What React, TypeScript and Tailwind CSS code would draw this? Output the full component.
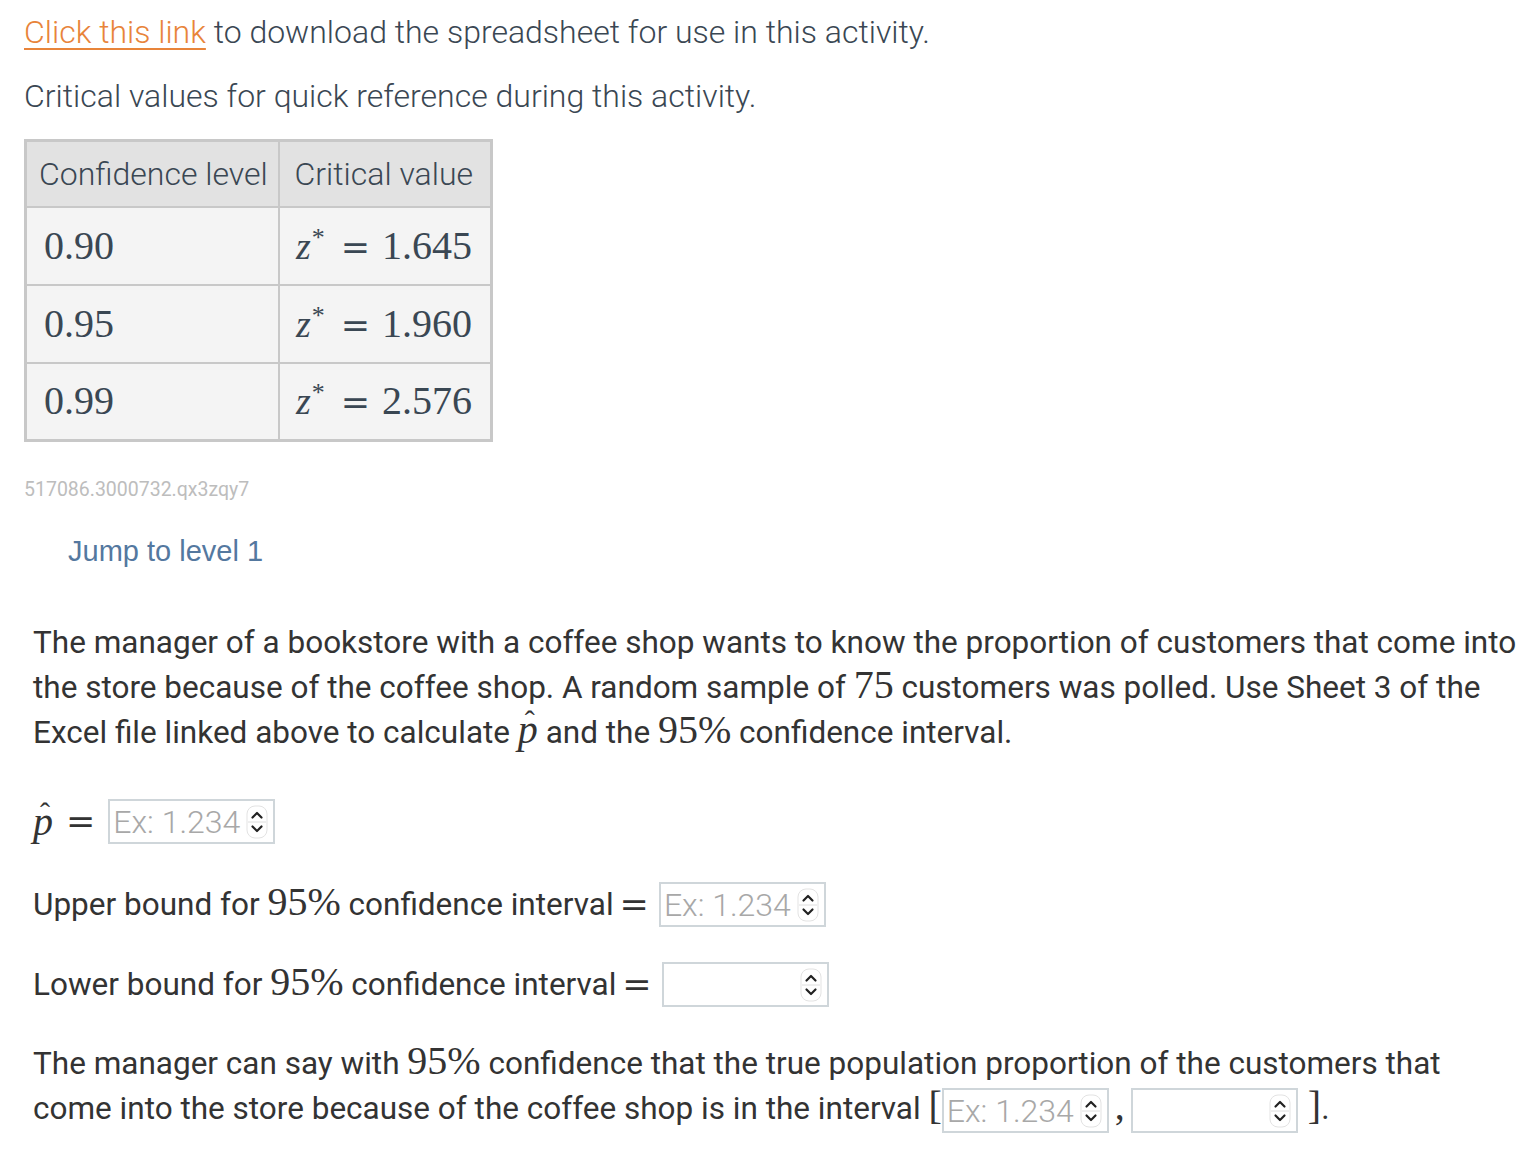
import React from "react";

const SANS = { fontFamily: "Roboto, 'Liberation Sans', sans-serif" };
const SERIF = { fontFamily: "'Liberation Serif', 'DejaVu Serif', serif" };
const EQ = { fontFamily: "'DejaVu Serif', 'Liberation Serif', serif" };

const Spinner = () => (
  <svg width="22" height="34" viewBox="0 0 22 34" className="shrink-0">
    <rect x="1" y="1" width="20" height="32" rx="8" fill="#ffffff" stroke="#e3e3e3" />
    <line x1="2" y1="17" x2="20" y2="17" stroke="#dedede" />
    <path d="M6.5 12.5 L11 8 L15.5 12.5" stroke="#222" strokeWidth="2.2" fill="none" strokeLinecap="round" strokeLinejoin="round" />
    <path d="M6.5 21.5 L11 26 L15.5 21.5" stroke="#222" strokeWidth="2.2" fill="none" strokeLinecap="round" strokeLinejoin="round" />
  </svg>
);

const NumInput = ({ placeholder }: { placeholder?: string }) => (
  <span className="inline-flex h-[45px] w-[167px] items-center justify-between border-2 border-[#cfd6da] bg-white pl-[3px] pr-[5px] align-middle leading-none">
    <span className="text-[32px] font-light text-[#a8a8a8]" style={SANS}>
      {placeholder ?? ""}
    </span>
    <Spinner />
  </span>
);

const Num = ({ children }: { children: React.ReactNode }) => (
  <span className="text-[40px] leading-none" style={SERIF}>
    {children}
  </span>
);

const PHat = () => (
  <span className="relative inline-block text-[40px] italic leading-none" style={SERIF}>
    <span className="absolute left-[7px] top-[-4px] not-italic text-[30px]">ˆ</span>
    p
  </span>
);

const Eq = ({ cls = "mx-[13px]" }: { cls?: string }) => (
  <span className={`${cls} text-[35px] leading-none`} style={EQ}>
    =
  </span>
);

const rows = [
  { level: "0.90", value: "1.645" },
  { level: "0.95", value: "1.960" },
  { level: "0.99", value: "2.576" },
];

export default function App() {
  return (
    <div className="min-h-[1170px] w-[1527px] bg-white pl-[24px] pt-[10px] text-[#3a4753]" style={SANS}>
      <p className="text-[32px] font-light leading-[44px]">
        <a className="text-[#e8843a] underline decoration-2 underline-offset-[5px]">Click this link</a> to download
        the spreadsheet for use in this activity.
      </p>
      <p className="mt-[20px] text-[32px] font-light leading-[44px]">
        Critical values for quick reference during this activity.
      </p>

      <table className="mt-[21px] border-collapse border-[3px] border-[#c8c8c8]">
        <thead>
          <tr className="h-[66px] bg-[#e2e2e2]">
            <th className="w-[253px] border-2 border-[#c8c8c8] pl-[12px] text-left text-[32px] font-light">
              Confidence level
            </th>
            <th className="w-[213px] border-2 border-[#c8c8c8] pl-[15px] text-left text-[32px] font-light">
              Critical value
            </th>
          </tr>
        </thead>
        <tbody>
          {rows.map((r) => (
            <tr key={r.level} className="h-[78px] bg-[#f4f4f4]">
              <td className="border-2 border-[#c8c8c8] pl-[17px]">
                <Num>{r.level}</Num>
              </td>
              <td className="border-2 border-[#c8c8c8] pr-[18px] text-right">
                <span className="text-[38px] leading-none" style={SERIF}>
                  <i>z</i>
                  <sup className="ml-[1px] text-[26px]">*</sup>
                </span>
                <Eq cls="ml-[16px] mr-[12px]" />
                <Num>{r.value}</Num>
              </td>
            </tr>
          ))}
        </tbody>
      </table>

      <div className="mt-[34px] text-[19.5px] leading-[28px] text-[#bdbdbd]">517086.3000732.qx3zqy7</div>

      <div
        className="ml-[44px] mt-[25px] text-[29px] leading-[44px] text-[#54789f]"
        style={{ fontFamily: "'Liberation Sans', Arial, sans-serif" }}
      >
        Jump to level 1
      </div>

      <div className="pl-[9px] text-[#333333]">
        <p className="mt-[48px] w-[1494px] text-[31.5px] leading-[44px]">
          The manager of a bookstore with a coffee shop wants to know the proportion of customers that come into the
          store because of the coffee shop. A random sample of <Num>75</Num> customers was polled. Use Sheet 3 of the
          Excel file linked above to calculate <PHat /> and the <Num>95%</Num> confidence interval.
        </p>

        <div className="mt-[44px] flex h-[45px] items-center">
          <PHat />
          <Eq />
          <NumInput placeholder="Ex: 1.234" />
        </div>

        <div className="mt-[38px] flex h-[45px] items-center text-[31.5px]">
          <span>
            Upper bound for <Num>95%</Num> confidence interval
          </span>
          <Eq cls="ml-[6px] mr-[10px]" />
          <NumInput placeholder="Ex: 1.234" />
        </div>

        <div className="mt-[35px] flex h-[45px] items-center text-[31.5px]">
          <span>
            Lower bound for <Num>95%</Num> confidence interval
          </span>
          <Eq cls="ml-[6px] mr-[10px]" />
          <NumInput />
        </div>

        <p className="mt-[34px] w-[1470px] text-[31.5px] leading-[45px]">
          The manager can say with <Num>95%</Num> confidence that the true population proportion of the customers that
          come into the store because of the coffee shop is in the interval{" "}
          <span className="text-[40px] font-light leading-none" style={SERIF}>
            [
          </span>
          <NumInput placeholder="Ex: 1.234" />
          <span className="mx-[6px] text-[40px] leading-none" style={SERIF}>
            ,
          </span>
          <NumInput />
          <span className="ml-[10px] text-[40px] leading-none" style={SERIF}>
            ]
          </span>
          .
        </p>
      </div>
    </div>
  );
}
